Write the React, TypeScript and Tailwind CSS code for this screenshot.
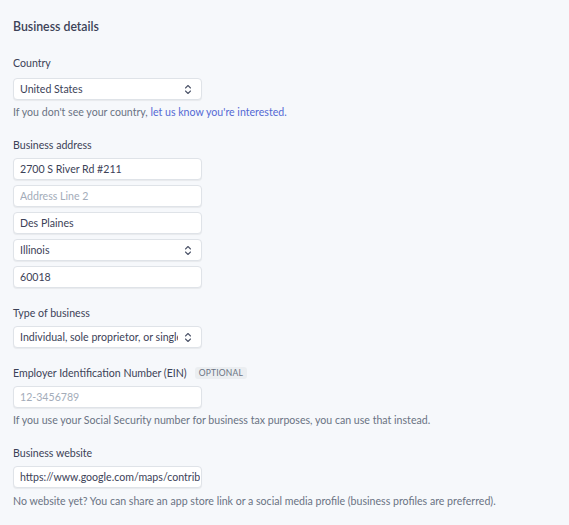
import React from "react";

const font = { fontFamily: 'Lato, "Noto Sans", Arial, sans-serif' };

function Chevrons() {
  return (
    <svg width="8" height="11" viewBox="0 0 8 11" fill="none" stroke="#4f566b" strokeWidth="1.1" strokeLinecap="round" strokeLinejoin="round">
      <path d="M1.5 4 L4 1.5 L6.5 4" />
      <path d="M1.5 7 L4 9.5 L6.5 7" />
    </svg>
  );
}

function Field({ value, placeholder, select }: { value?: string; placeholder?: string; select?: boolean }) {
  return (
    <div className={`w-[189px] h-[22px] bg-white border border-[#dfe3e8] rounded-[4px] shadow-[0_1px_1px_rgba(0,0,0,0.06)] flex items-center pl-[6px] overflow-hidden ${select ? "pr-[9px]" : "pr-[1px]"}`}>
      <span className={`flex-1 whitespace-nowrap overflow-hidden text-[10.6px] leading-[16px] ${value ? "text-[#3c4257]" : "text-[#a3acb9]"}`}>
        {value ?? placeholder}
      </span>
      {select && (
        <span className="ml-[6px] flex items-center">
          <Chevrons />
        </span>
      )}
    </div>
  );
}

function Label({ children }: { children: React.ReactNode }) {
  return <div className="text-[10.6px] leading-[16px] text-[#3c4257]">{children}</div>;
}

function Help({ children }: { children: React.ReactNode }) {
  return <div className="text-[10.6px] leading-[16px] text-[#6a7383] whitespace-nowrap">{children}</div>;
}

export default function App() {
  return (
    <div className="w-[569px] h-[525px] bg-[#f6f8fb] overflow-hidden pl-[13px] pt-[18px]" style={font}>
      <div className="text-[12.3px] leading-[18px] font-semibold text-[#3c4257]">Business details</div>

      <div className="mt-[19px]">
        <Label>Country</Label>
        <div className="mt-[7px]">
          <Field value="United States" select />
        </div>
        <div className="mt-[4px]">
          <Help>
            If you don't see your country, <span className="text-[#5469d4]">let us know you're interested.</span>
          </Help>
        </div>
      </div>

      <div className="mt-[17px]">
        <Label>Business address</Label>
        <div className="mt-[5px] flex flex-col gap-[5px]">
          <Field value="2700 S River Rd #211" />
          <Field placeholder="Address Line 2" />
          <Field value="Des Plaines" />
          <Field value="Illinois" select />
          <Field value="60018" />
        </div>
      </div>

      <div className="mt-[17px]">
        <Label>Type of business</Label>
        <div className="mt-[5px]">
          <Field value="Individual, sole proprietor, or single-member LLC" select />
        </div>
      </div>

      <div className="mt-[17px]">
        <div className="flex items-center gap-[8px]">
          <Label>Employer Identification Number (EIN)</Label>
          <span className="bg-[#ebeef1] text-[#6a7383] text-[8.5px] leading-[12px] px-[4px] rounded-[3px] tracking-[0.2px]">OPTIONAL</span>
        </div>
        <div className="mt-[5px]">
          <Field placeholder="12-3456789" />
        </div>
        <div className="mt-[4px]">
          <Help>If you use your Social Security number for business tax purposes, you can use that instead.</Help>
        </div>
      </div>

      <div className="mt-[17px]">
        <Label>Business website</Label>
        <div className="mt-[5px]">
          <Field value="https://www.google.com/maps/contrib/1234567890" />
        </div>
        <div className="mt-[5px]">
          <Help>No website yet? You can share an app store link or a social media profile (business profiles are preferred).</Help>
        </div>
      </div>
    </div>
  );
}
